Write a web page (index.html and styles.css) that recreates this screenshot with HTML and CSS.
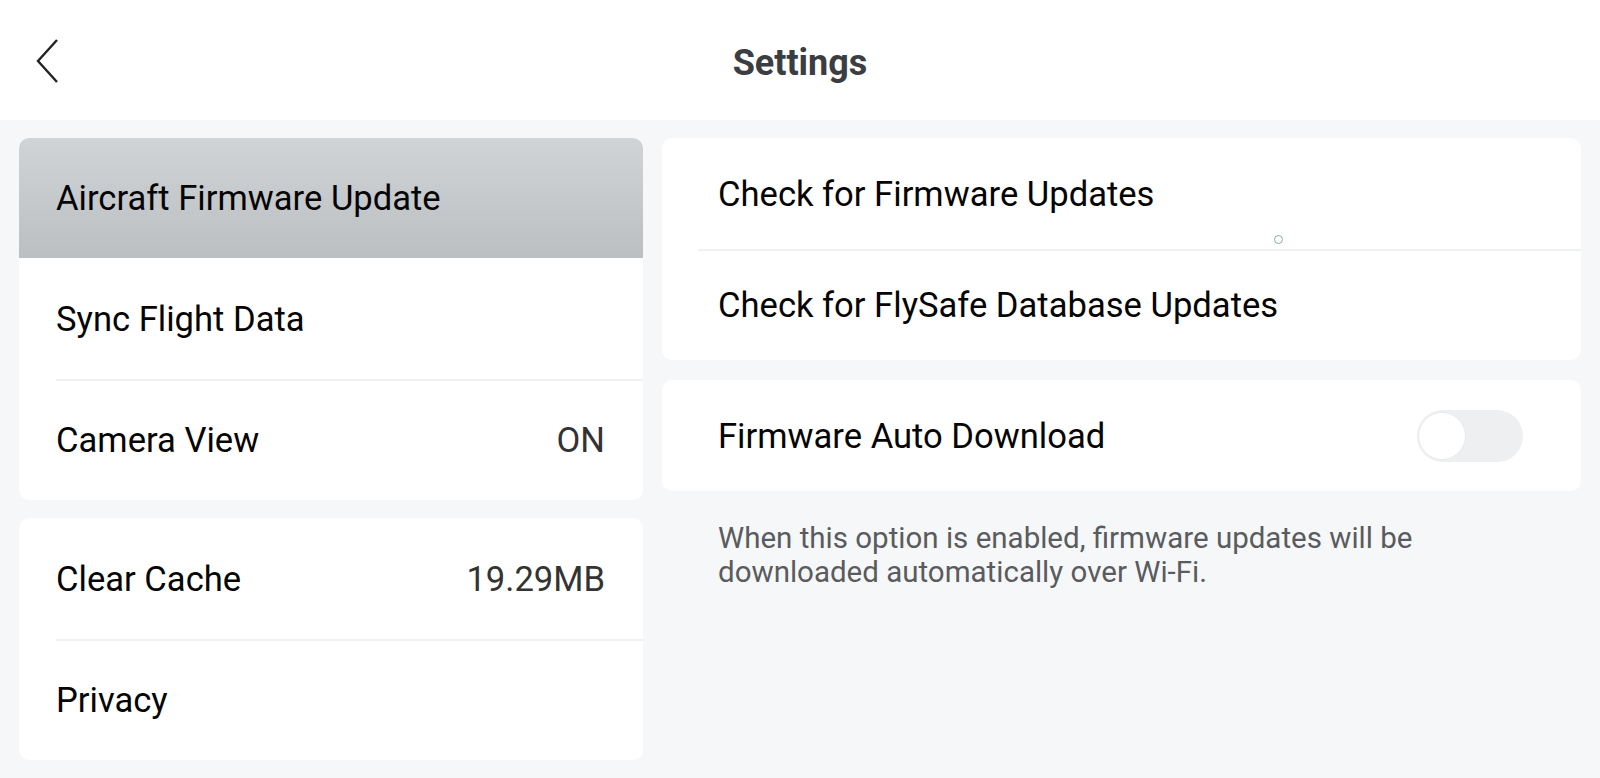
FILE: index.html
```html
<!DOCTYPE html>
<html>
<head>
<meta charset="utf-8">
<link rel="stylesheet" href="styles.css">
</head>
<body>
<header class="topbar">
  <button class="back" aria-label="Back">
    <svg width="24" height="46" viewBox="0 0 24 46"><path d="M22 2 L3 23 L22 44" fill="none" stroke="#222" stroke-width="2.4" stroke-linejoin="miter"/></svg>
  </button>
  <h1 class="title">Settings</h1>
</header>
<main class="content">
  <section class="left">
    <div class="card">
      <div class="row selected"><span class="label">Aircraft Firmware Update</span></div>
      <div class="row"><span class="label">Sync Flight Data</span></div>
      <div class="row sep"><span class="label">Camera View</span><span class="value">ON</span></div>
    </div>
    <div class="card">
      <div class="row"><span class="label">Clear Cache</span><span class="value">19.29MB</span></div>
      <div class="row sep"><span class="label">Privacy</span></div>
    </div>
  </section>
  <section class="right">
    <div class="card">
      <div class="rrow"><span class="label">Check for Firmware Updates</span><span class="dot"></span></div>
      <div class="rrow sep"><span class="label">Check for FlySafe Database Updates</span></div>
    </div>
    <div class="card">
      <div class="rrow"><span class="label">Firmware Auto Download</span><span class="toggle"><span class="knob"></span></span></div>
    </div>
    <p class="note">When this option is enabled, firmware updates will be downloaded automatically over Wi-Fi.</p>
  </section>
</main>
</body>
</html>
```
FILE: styles.css
```css
* { box-sizing: border-box; }
html, body { margin: 0; padding: 0; }
body {
  width: 1600px;
  height: 778px;
  overflow: hidden;
  background: #f6f7f9;
  font-family: Roboto, "Liberation Sans", sans-serif;
  color: #050505;
}
.topbar {
  height: 120px;
  background: #fff;
  display: flex;
  align-items: center;
  justify-content: center;
  padding-top: 5px;
  position: relative;
}
.back {
  position: absolute;
  left: 35px;
  top: 38px;
  border: 0;
  background: none;
  padding: 0;
  width: 24px;
  height: 46px;
}
.back svg { display: block; }
.title {
  margin: 0;
  font-size: 36px;
  font-weight: 700;
  color: #3a3d41;
}
.content {
  display: flex;
  gap: 19px;
  padding: 18px 19px 0 19px;
}
.left { width: 624px; display: flex; flex-direction: column; gap: 18px; }
.right { flex: 1; display: flex; flex-direction: column; gap: 20px; }
.card {
  background: #fff;
  border-radius: 10px;
  overflow: hidden;
}
.row {
  height: 121px;
  display: flex;
  align-items: center;
  justify-content: space-between;
  padding: 0 38px 0 37px;
  position: relative;
  font-size: 34.6px;
}
.row.selected {
  background: linear-gradient(#d1d4d7, #bcbfc2);
  height: 120px;
}
.sep::before {
  content: "";
  position: absolute;
  top: 0;
  right: 0;
  left: 37px;
  height: 2px;
  background: #eff0f2;
}
.value { color: #333; }
.rrow {
  height: 111px;
  display: flex;
  align-items: center;
  justify-content: space-between;
  padding: 0 58px 0 56px;
  position: relative;
  font-size: 34.6px;
}
.rrow.sep::before { left: 36px; }
.dot {
  position: absolute;
  left: 612px;
  top: 97px;
  width: 9px;
  height: 9px;
  border: 1.5px solid #8fa9aa;
  border-radius: 50%;
}
.toggle {
  width: 106px;
  height: 52px;
  border-radius: 26px;
  background: #eeeff1;
  position: relative;
}
.knob {
  position: absolute;
  left: 1px;
  top: 2px;
  width: 48px;
  height: 48px;
  border-radius: 50%;
  background: #fff;
  border: 1.5px solid #e9eaec;
}
.note {
  margin: 10px 0 0 56px;
  font-size: 29.5px;
  line-height: 34px;
  color: #5a5b5e;
  width: 760px;
}
```
